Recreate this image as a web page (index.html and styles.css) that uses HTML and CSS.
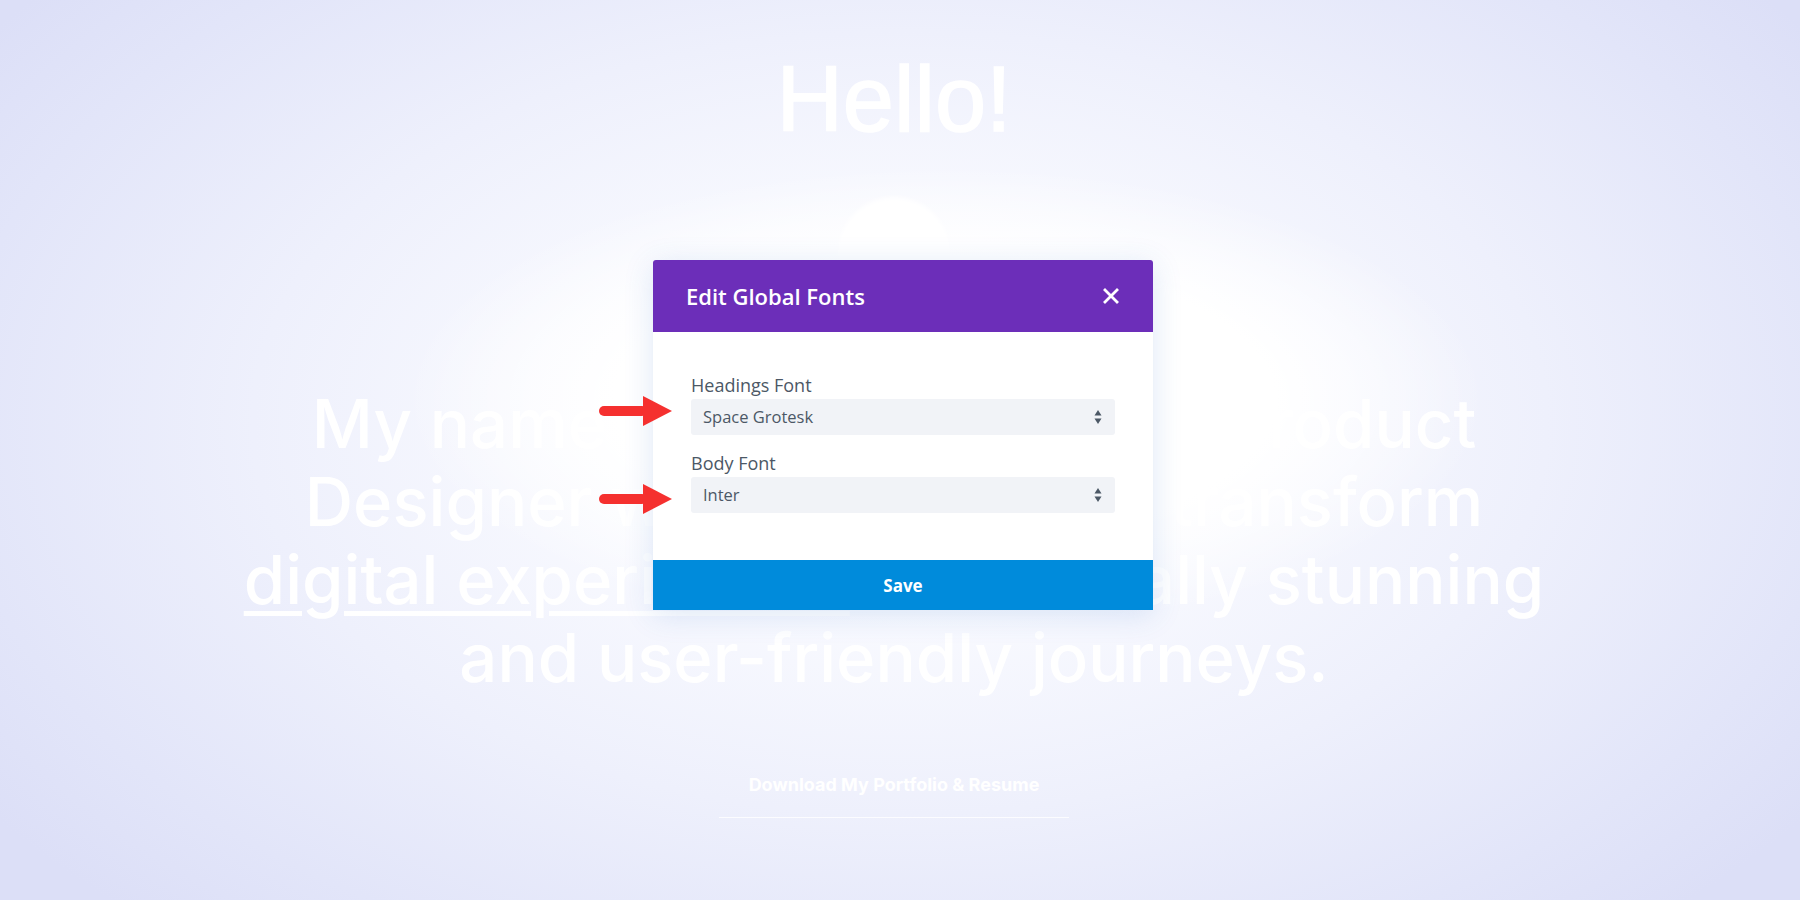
FILE: index.html
```html
<!DOCTYPE html>
<html lang="en">

<head>
  <meta charset="UTF-8">
  <title>Edit Global Fonts</title>
  <link rel="stylesheet" href="styles.css">
</head>

<body>
  <!-- page behind the modal -->
  <div class="hero">
    <h1 class="hello">Hello!</h1>
    <div class="avatar"></div>
    <p class="intro">
      My name is Kelsey Moran, a Product<br>
      Designer who helps teams transform<br>
      <u>digital experiences</u> into visually stunning<br>
      and user-friendly journeys.
    </p>
    <a class="download" href="#">Download My Portfolio &amp; Resume</a>
  </div>

  <div class="modal">
    <div class="modal-header">
      <h2>Edit Global Fonts</h2>
      <button class="close-btn" type="button" aria-label="Close">
        <svg width="16" height="16" viewBox="0 0 16 16">
          <path d="M2 2 L14 14 M14 2 L2 14" stroke="#ffffff" stroke-width="2.8" stroke-linecap="square" />
        </svg>
      </button>
    </div>

    <div class="modal-body">
      <div class="form-group">
        <label for="headingsFont">Headings Font</label>
        <div class="select-wrap">
          <select id="headingsFont">
            <option>Space Grotesk</option>
            <option>Inter</option>
            <option>Open Sans</option>
          </select>
          <svg class="select-arrows" width="8" height="16" viewBox="0 0 8 16">
            <polygon points="4,1 7.5,6.5 0.5,6.5" fill="#4c5866" />
            <polygon points="0.5,9.5 7.5,9.5 4,15" fill="#4c5866" />
          </svg>
        </div>
      </div>

      <div class="form-group">
        <label for="bodyFont">Body Font</label>
        <div class="select-wrap">
          <select id="bodyFont">
            <option>Inter</option>
            <option>Space Grotesk</option>
            <option>Open Sans</option>
          </select>
          <svg class="select-arrows" width="8" height="16" viewBox="0 0 8 16">
            <polygon points="4,1 7.5,6.5 0.5,6.5" fill="#4c5866" />
            <polygon points="0.5,9.5 7.5,9.5 4,15" fill="#4c5866" />
          </svg>
        </div>
      </div>
    </div>

    <button class="save-btn" type="button">Save</button>
  </div>

  <!-- annotation arrows, drawn over the modal -->
  <svg class="arrow arrow-one" width="76" height="32" viewBox="0 0 76 32">
    <rect x="1" y="11" width="48" height="10" rx="5" fill="#f5302f" />
    <polygon points="45,1 74,16 45,31" fill="#f5302f" />
  </svg>
  <svg class="arrow arrow-two" width="76" height="32" viewBox="0 0 76 32">
    <rect x="1" y="11" width="48" height="10" rx="5" fill="#f5302f" />
    <polygon points="45,1 74,16 45,31" fill="#f5302f" />
  </svg>
</body>

</html>
```

FILE: styles.css
```css
html,
body {
  height: 100%;
}

body {
  margin: 0;
  overflow: hidden;
  font-family: "Open Sans", Arial, sans-serif;
  background:
    radial-gradient(ellipse 600px 260px at 945px 400px, #ffffff 0%, #ffffff 55%, rgba(255, 255, 255, 0) 90%),
    radial-gradient(ellipse 62% 75% at 50% 47%, #ffffff 0%, #fafbff 25%, #eef0fc 58%, #e2e5f9 85%, #dcdff7 100%);
}

/* background page */
.hero {
  display: flex;
  flex-direction: column;
  align-items: center;
  padding: 54px 12px 0 0;
  color: #ffffff;
}

.hello {
  margin: 0;
  font-family: "Liberation Sans", Arial, sans-serif;
  font-size: 92px;
  font-weight: 400;
  line-height: 90px;
  -webkit-text-stroke: 1.5px #ffffff;
}

.avatar {
  width: 112px;
  height: 112px;
  margin-top: 53px;
  border-radius: 50%;
  background: rgba(255, 255, 255, 0.9);
  filter: blur(2px);
}

.intro {
  margin: 76px 0 0;
  font-family: Inter, sans-serif;
  font-size: 67px;
  font-weight: 500;
  line-height: 78px;
  text-align: center;
}

.intro u {
  text-decoration-thickness: 5px;
  text-underline-offset: 7px;
}

.download {
  margin-top: 58px;
  padding: 20px 30px 22px;
  font-family: Inter, sans-serif;
  font-size: 18px;
  font-weight: 700;
  line-height: 20px;
  color: #ffffff;
  text-decoration: none;
  border-bottom: 1px solid rgba(255, 255, 255, 0.8);
}

/* arrows */
.arrow {
  position: absolute;
  left: 598px;
}

.arrow-one {
  top: 395px;
}

.arrow-two {
  top: 483px;
}

/* modal */
.modal {
  position: absolute;
  top: 260px;
  left: 653px;
  width: 500px;
  background-color: #ffffff;
  border-radius: 3px 3px 0 0;
  box-shadow: 0 5px 30px rgba(43, 105, 200, 0.16);
}

.modal-header {
  display: flex;
  align-items: center;
  justify-content: space-between;
  height: 72px;
  padding: 0 34px 0 33px;
  background-color: #6c2eb9;
  border-radius: 3px 3px 0 0;
}

.modal-header h2 {
  margin: 0;
  font-size: 22px;
  font-weight: 600;
  color: #ffffff;
}

.close-btn {
  display: flex;
  padding: 0;
  border: none;
  background: none;
  cursor: pointer;
}

.modal-body {
  padding: 42px 38px 47px;
}

.form-group {
  margin-bottom: 17px;
}

.form-group:last-child {
  margin-bottom: 0;
}

label {
  display: block;
  margin-bottom: 3px;
  font-size: 18px;
  line-height: 22px;
  color: #4c5866;
}

.select-wrap {
  position: relative;
}

select {
  display: block;
  width: 100%;
  height: 36px;
  padding: 0 12px 2px;
  font-family: "Open Sans", Arial, sans-serif;
  font-size: 16.5px;
  color: #4c5866;
  background-color: #f1f3f7;
  border: none;
  border-radius: 3px;
  appearance: none;
  -webkit-appearance: none;
}

.select-arrows {
  position: absolute;
  top: 10px;
  right: 13px;
  pointer-events: none;
}

.save-btn {
  display: block;
  width: 100%;
  height: 50px;
  font-family: "Open Sans", Arial, sans-serif;
  font-size: 17px;
  font-weight: 700;
  color: #ffffff;
  background-color: #008bdb;
  border: none;
  cursor: pointer;
}
```
